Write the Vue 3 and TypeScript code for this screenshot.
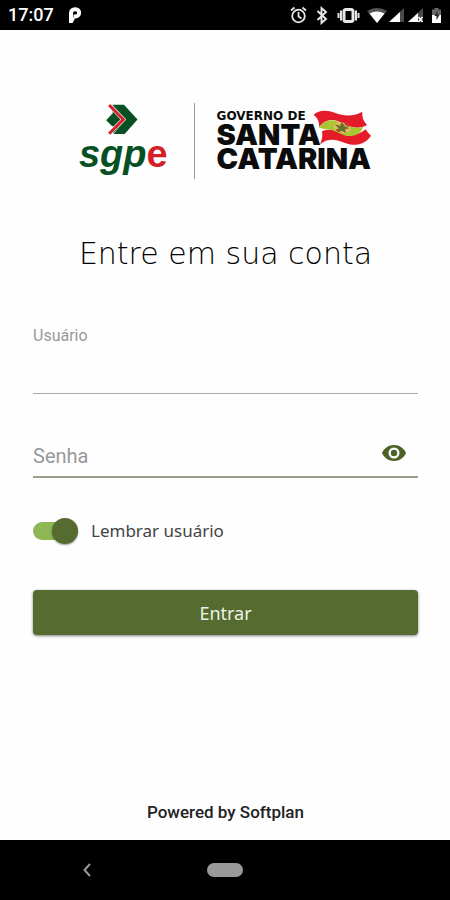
<script setup lang="ts">
import { ref } from 'vue'

const username = ref('')
const password = ref('')
const showPassword = ref(false)
const remember = ref(true)
</script>

<template>
  <div class="screen">
    <header class="status-bar">
      <div class="status-left">
        <span class="clock">17:07</span>
        <svg class="parking" viewBox="0 0 14 16" aria-hidden="true">
          <path d="M3 11V6A4 3.800 0 0 1 7 2.200H7.500A3.400 3.400 0 0 1 7.500 9.500H5.500" fill="none" stroke="#fff" stroke-width="4" />
          <path d="M1 7V16H4.500L7 11.500Z" fill="#fff" />
        </svg>
      </div>
      <svg class="status-icons" viewBox="0 0 156 20" aria-hidden="true">
        <g fill="none" stroke="#e8e8e8" stroke-width="1.800">
          <circle cx="8.500" cy="11" r="6.300" />
          <path d="M8.500 7v4.500l3 2M1 5.500 4.500 2.500M16 5.500 12.500 2.500" />
          <path d="M27.500 6 36 14 31.500 18V3L36 7 27.500 15" stroke-width="1.900" />
          <rect x="54" y="4.500" width="9" height="12" rx="2" stroke-width="3" />
          <path d="M51 5.500v10M66 5.500v10M48.500 8v5M68.500 8v5" stroke-width="2" />
        </g>
        <path d="M77 6Q87 0 97 6L87 18Z" fill="#555" />
        <path d="M79.500 8.500Q87 4.500 94.500 8.500L87 18Z" fill="#fff" />
        <path d="M114 3v14H99Z" fill="#4a4a4a" />
        <path d="M110 7v10H99Z" fill="#fff" />
        <path d="M133 3v14H118Z" fill="#4a4a4a" />
        <path d="M128 8v9H118Z" fill="#fff" />
        <path d="m128.500 12 4 5m0-5-4 5" stroke="#fff" stroke-width="1.500" />
        <path d="M142 4.500h2.500V3h4v1.500h2.500V10h-9Z" fill="#666" />
        <path d="M142 10h9v8h-9Z" fill="#fff" />
        <path d="m147.500 6-3 5h2v4l3-5h-2Z" fill="#222" />
      </svg>
    </header>

    <main class="content">
      <div class="brand">
        <div class="sgpe">
          <svg class="chevrons" viewBox="105 25 102 100" aria-hidden="true">
            <path d="M127 30H162L203 75 164 119H130L168 75Z" fill="#075024" />
            <path d="M127 32 168 75 130 117Z" fill="#075024" />
            <path d="M108 77 127 57 146 76 127 96Z" fill="#075024" />
            <path d="M117 31 160 75 117 118" fill="none" stroke="#fff" stroke-width="12" />
            <path d="M117 31 160 75 117 118" fill="none" stroke="#d51f28" stroke-width="9" />
            <path d="M112 41 122 51 115 58 105 48ZM112 108 122 98 115 91 105 102Z" fill="#fefefe" />
          </svg>
          <div class="sgpe-word"><span class="slanted">sgp</span><span class="red">e</span></div>
        </div>
        <div class="divider"></div>
        <div class="state">
          <div class="state-small">GOVERNO DE</div>
          <div class="state-big">SANTA</div>
          <div class="state-big">CATARINA</div>
          <svg class="flag" viewBox="312 44 180 112" aria-hidden="true">
            <path d="M317 60C332 46 356 45 382 55S436 66 463 51Q460 72 477 91C455 104 428 101 402 86S354 72 333 98Q336 76 317 60Z" fill="#e51b2a" />
            <path d="M342 110C364 101 386 106 408 116S452 120 473 104Q480 116 489 123C473 148 443 157 414 146S362 128 336 149Q346 127 342 110Z" fill="#e51b2a" />
            <path d="M333 99C350 73 374 72 399 84S447 104 466 96Q456 122 430 124C403 126 387 108 366 105Q350 103 333 99Z" fill="#a9c731" />
            <path d="M376 91Q391 76 410 86 431 93 428 107 415 122 397 112 378 108 376 91Z" fill="#dfbd65" />
            <path d="M380 88 396 93 401 81 410 94 424 101 411 104 415 115 400 108 386 111 391 101Z" fill="#68742a" />
            <path d="M384 105 397 110M410 87 423 95" fill="none" stroke="#b83a24" stroke-width="4" />
          </svg>
        </div>
      </div>

      <h1 class="title">Entre em sua conta</h1>

      <form class="form" @submit.prevent>
        <div class="field field-user">
          <label for="username">Usuário</label>
          <input id="username" v-model="username" type="text" autocomplete="username" />
        </div>
        <div class="field field-pass">
          <label for="password">Senha</label>
          <input id="password" v-model="password" :type="showPassword ? 'text' : 'password'" autocomplete="current-password" />
          <button type="button" class="reveal" aria-label="Mostrar senha" @click="showPassword = !showPassword">
            <svg viewBox="0 0 24 16" aria-hidden="true">
              <path d="M12 0C6.500 0 2 3.300 0 8c2 4.700 6.500 8 12 8s10-3.300 12-8C22 3.300 17.500 0 12 0Z" fill="#4d6326" />
              <circle cx="12" cy="8" r="5.500" fill="#fff" />
              <circle cx="12" cy="8" r="3.200" fill="#4d6326" />
            </svg>
          </button>
        </div>
        <div class="remember">
          <input id="remember" v-model="remember" type="checkbox" role="switch" class="switch" />
          <label for="remember">Lembrar usuário</label>
        </div>
        <button type="submit" class="submit">Entrar</button>
      </form>

      <footer class="powered">Powered by Softplan</footer>
    </main>

    <nav class="nav-bar">
      <button type="button" class="nav-back" aria-label="Voltar">
        <svg viewBox="0 0 8 14" aria-hidden="true">
          <path d="M7 1 1.500 7 7 13" fill="none" stroke="#999" stroke-width="2" />
        </svg>
      </button>
      <button type="button" class="nav-home" aria-label="Início"></button>
      <span></span>
    </nav>
  </div>
</template>

<style>
body {
  margin: 0;
  background: #fff;
}
</style>

<style scoped>
.screen {
  min-height: 100vh;
  display: flex;
  flex-direction: column;
  background: #fefefe;
  font-family: Roboto, "Liberation Sans", sans-serif;
}
button {
  border: 0;
  padding: 0;
  background: none;
  font: inherit;
  cursor: pointer;
}
.status-bar {
  height: 30px;
  display: flex;
  align-items: center;
  justify-content: space-between;
  padding: 0 4px 0 8px;
  background: #000;
  color: #fff;
}
.status-left {
  display: flex;
  align-items: center;
  gap: 14px;
}
.clock {
  font-size: 18px;
  line-height: 30px;
  font-weight: 500;
}
.parking {
  width: 14px;
  height: 16px;
}
.status-icons {
  width: 156px;
  height: 20px;
}
.content {
  flex: 1;
  display: flex;
  flex-direction: column;
  padding: 73px 32px 16px 33px;
}
.brand {
  display: flex;
  justify-content: center;
  align-items: flex-start;
}
.sgpe {
  display: flex;
  flex-direction: column;
  align-items: center;
}
.chevrons {
  width: 34px;
  height: 33px;
  margin-right: 2px;
}
.sgpe-word {
  font-family: "Liberation Sans", Arial, sans-serif;
  font-size: 38px;
  line-height: 36px;
  font-weight: 700;
  color: #075024;
}
.slanted {
  font-style: italic;
}
.red {
  color: #d51f28;
}
.divider {
  width: 1px;
  height: 76px;
  margin: 0 22px 0 26px;
  background: #9a9a9a;
}
.state {
  position: relative;
  padding: 6px 1px 0 0;
  color: #0c0c0c;
}
.state-small {
  font-family: "DejaVu Sans", sans-serif;
  font-size: 12px;
  line-height: 14px;
  font-weight: 700;
}
.state-big {
  font-family: Inter, sans-serif;
  font-size: 29px;
  line-height: 24px;
  font-weight: 900;
}
.flag {
  position: absolute;
  top: 6px;
  right: 0;
  width: 60px;
  height: 38px;
}
.title {
  margin: 55px 0 0;
  font-family: "DejaVu Sans", "Open Sans", sans-serif;
  font-size: 30px;
  line-height: 40px;
  font-weight: 200;
  text-align: center;
  color: #000;
}
.form {
  display: flex;
  flex-direction: column;
  margin-top: 52px;
}
.field {
  display: flex;
  color: #999;
}
.field input {
  flex: 1;
  min-width: 0;
  border: 0;
  padding: 0;
  outline: 0;
  background: transparent;
  font: inherit;
  color: #222;
}
.field-user {
  flex-direction: column;
  font-size: 16px;
  line-height: 20px;
  border-bottom: 1px solid #aaa;
}
.field-user input {
  flex: none;
  height: 47px;
}
.field-pass {
  align-items: flex-end;
  height: 44px;
  margin-top: 38px;
  font-size: 20px;
  line-height: 24px;
  border-bottom: 2px solid #9a9f8d;
}
.field-pass label {
  padding-bottom: 8px;
}
.reveal {
  display: flex;
  padding: 0 12px 15px;
}
.reveal svg {
  width: 24px;
  height: 16px;
}
.remember {
  display: flex;
  align-items: center;
  gap: 13px;
  height: 28px;
  margin-top: 39px;
  font-family: "Noto Sans", sans-serif;
  font-size: 17px;
  line-height: 28px;
  color: #444;
}
.switch {
  appearance: none;
  display: flex;
  align-items: center;
  width: 45px;
  height: 18px;
  margin: 0;
  border-radius: 9px;
  background: #bbb;
  cursor: pointer;
}
.switch::before {
  content: "";
  width: 26px;
  height: 26px;
  flex: none;
  border-radius: 50%;
  background: #eee;
  box-shadow: 0 1px 2px rgba(0, 0, 0, 0.4);
}
.switch:checked {
  justify-content: flex-end;
  background: #8db655;
}
.switch:checked::before {
  background: #556b2f;
}
.submit {
  height: 45px;
  margin-top: 45px;
  border-radius: 4px;
  background: #556b2f;
  box-shadow: 0 1px 3px rgba(0, 0, 0, 0.5);
  font-family: "Noto Sans", sans-serif;
  font-size: 18px;
  color: #eef2e6;
}
.powered {
  margin-top: auto;
  font-size: 17px;
  line-height: 24px;
  font-weight: 500;
  text-align: center;
  color: #222;
}
.nav-bar {
  height: 60px;
  display: grid;
  grid-template-columns: 1fr 36px 1fr;
  align-items: center;
  background: #000;
}
.nav-back {
  display: flex;
  padding-left: 83px;
}
.nav-back svg {
  width: 8px;
  height: 14px;
}
.nav-home {
  height: 14px;
  border-radius: 7px;
  background: #999;
}
</style>
